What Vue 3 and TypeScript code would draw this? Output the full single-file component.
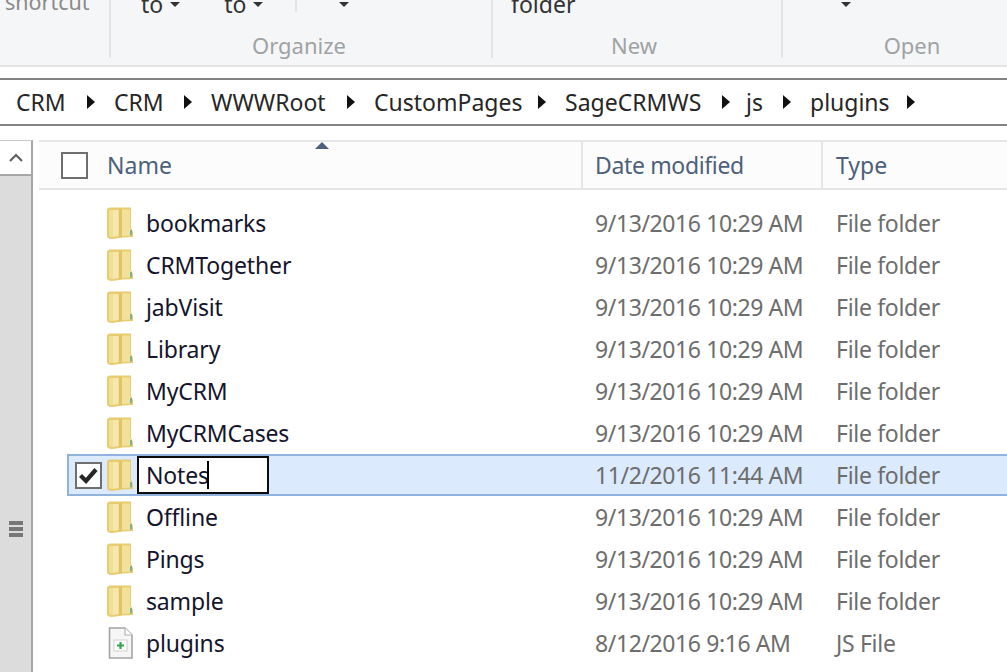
<script setup lang="ts">
interface Row {
  name: string
  date: string
  type: string
  selected?: boolean
  file?: boolean
}

const crumbs = ['CRM', 'CRM', 'WWWRoot', 'CustomPages', 'SageCRMWS', 'js', 'plugins']

const rows: Row[] = [
  { name: 'bookmarks', date: '9/13/2016 10:29 AM', type: 'File folder' },
  { name: 'CRMTogether', date: '9/13/2016 10:29 AM', type: 'File folder' },
  { name: 'jabVisit', date: '9/13/2016 10:29 AM', type: 'File folder' },
  { name: 'Library', date: '9/13/2016 10:29 AM', type: 'File folder' },
  { name: 'MyCRM', date: '9/13/2016 10:29 AM', type: 'File folder' },
  { name: 'MyCRMCases', date: '9/13/2016 10:29 AM', type: 'File folder' },
  { name: 'Notes', date: '11/2/2016 11:44 AM', type: 'File folder', selected: true },
  { name: 'Offline', date: '9/13/2016 10:29 AM', type: 'File folder' },
  { name: 'Pings', date: '9/13/2016 10:29 AM', type: 'File folder' },
  { name: 'sample', date: '9/13/2016 10:29 AM', type: 'File folder' },
  { name: 'plugins', date: '8/12/2016 9:16 AM', type: 'JS File', file: true },
]
</script>

<template>
  <div class="explorer">
    <header class="ribbon">
      <section class="group group-shortcut">
        <div class="tools"><span class="tool-label">shortcut</span></div>
      </section>
      <section class="group group-organize">
        <div class="tools">
          <span class="tool move">to<i class="caret"></i></span>
          <span class="tool copy">to<i class="caret"></i></span>
          <span class="tool-sep"></span>
          <span class="tool delete"><i class="caret"></i></span>
        </div>
        <div class="group-name">Organize</div>
      </section>
      <section class="group group-new">
        <div class="tools"><span class="tool folder">folder</span></div>
        <div class="group-name">New</div>
      </section>
      <section class="group group-open">
        <div class="tools"><span class="tool props"><i class="caret"></i></span></div>
        <div class="group-name">Open</div>
      </section>
    </header>

    <nav class="address">
      <template v-for="(crumb, i) in crumbs" :key="i">
        <span class="crumb">{{ crumb }}</span>
        <i class="arrow"></i>
      </template>
    </nav>

    <div class="body">
      <aside class="scrollbar">
        <div class="scroll-up">
          <svg width="16" height="10" viewBox="0 0 16 10">
            <path d="M2 8 L8 2 L14 8" fill="none" stroke="#606060" stroke-width="2.2" />
          </svg>
        </div>
        <div class="scroll-grip">
          <span></span><span></span><span></span>
        </div>
      </aside>

      <main class="list">
        <div class="head">
          <i class="sort"></i>
          <div class="head-name">
            <span class="check"></span>
            <span>Name</span>
          </div>
          <div class="head-date">Date modified</div>
          <div class="head-type">Type</div>
        </div>

        <div class="rows">
          <div v-for="row in rows" :key="row.name" class="row" :class="{ selected: row.selected }">
            <div class="check-slot">
              <span v-if="row.selected" class="check">
                <svg width="23" height="23" viewBox="0 0 23 23">
                  <path d="M3.5 11.5 L9 17 L19 5.5" fill="none" stroke="#262626" stroke-width="4.2" />
                </svg>
              </span>
            </div>

            <svg v-if="row.file" class="icon" width="26" height="32" viewBox="0 0 26 32">
              <path d="M2.5 1 H18 L25 8 V31 H2.5 Z" fill="#f6f6f6" stroke="#a4a4a4" stroke-width="1.6" />
              <path d="M18 1 V8 H25" fill="#fff" stroke="#b4b4b4" stroke-width="1.2" />
              <rect x="7" y="13" width="13" height="11" fill="#fff" stroke="#cfcfcf" />
              <path d="M13.5 15 V22 M10 18.5 H17" stroke="#2fa84a" stroke-width="2.2" />
            </svg>
            <svg v-else class="icon" width="26" height="32" viewBox="0 0 26 32">
              <path d="M0 3 Q0 0.5 3 0.5 H24 V21 L26 25 V30 L16 30.5 L5 32 Q0 32 0 29 Z" fill="#e8cc72" />
              <path d="M2 3 H12 V29 L4 30 Q2 30 2 28 Z" fill="#f1df93" />
              <path d="M6 3 H11 V29 L6 29.5 Z" fill="#f5e8ac" />
              <path d="M15 2.5 H23 V21 L24.8 25 V28.5 L15 29 Z" fill="#f2e299" />
              <path d="M12 2 H15 V30 H12 Z" fill="#e2c468" />
              <path d="M24 23 V28.5" stroke="#84ad98" stroke-width="2" />
            </svg>

            <div class="name">
              <span v-if="row.selected" class="rename">{{ row.name }}<b class="cursor"></b></span>
              <span v-else>{{ row.name }}</span>
            </div>
            <div class="date">{{ row.date }}</div>
            <div class="type">{{ row.type }}</div>
          </div>
        </div>
      </main>
    </div>
  </div>
</template>

<style>
html,
body {
  margin: 0;
  background: #fff;
}
</style>

<style scoped>
.explorer {
  width: 1007px;
  height: 672px;
  overflow: hidden;
  display: flex;
  flex-direction: column;
  font-family: "Noto Sans", "Open Sans", sans-serif;
  font-size: 23px;
  color: #1c1c2c;
}

.ribbon {
  height: 65px;
  flex: none;
  display: flex;
  background: #f5f6f7;
  border-bottom: 2px solid #e2e3e4;
}

.group {
  height: 58px;
  box-sizing: border-box;
  border-right: 2px solid #e3e4e6;
  display: flex;
  flex-direction: column;
}

.group-shortcut { width: 111px; }
.group-organize { width: 382px; }
.group-new { width: 290px; }
.group-open { flex: 1; border-right: 0; }

.tools {
  height: 32px;
  flex: none;
  display: flex;
  align-items: flex-end;
  overflow: hidden;
  position: relative;
  line-height: 26px;
  color: #333;
}

.tool-label {
  margin-left: 5px;
  margin-bottom: 17px;
  font-size: 21.5px;
  color: #8a8a8a;
}

.tool {
  display: flex;
  align-items: center;
  margin-bottom: 15px;
}

.move { margin-left: 30px; }
.copy { margin-left: 44px; }
.tool-sep {
  width: 2px;
  height: 12px;
  background: #e3e4e6;
  align-self: flex-start;
  margin-left: 32px;
}
.delete { margin-left: 35px; }
.folder { margin-left: 18px; }
.props { margin-left: 51px; }

.caret {
  width: 0;
  height: 0;
  border-left: 5px solid transparent;
  border-right: 5px solid transparent;
  border-top: 5px solid #333;
  margin-left: 7px;
  align-self: flex-start;
  margin-top: 11px;
}

.tool.delete,
.tool.props {
  margin-bottom: 0;
  align-self: flex-start;
}

.tool.delete .caret,
.tool.props .caret {
  margin-top: 2px;
}

.group-name {
  text-align: center;
  font-size: 22px;
  line-height: 26px;
  color: #a0a2a5;
}

.group-organize .group-name { padding-right: 4px; }
.group-new .group-name { padding-right: 6px; }
.group-open .group-name { padding-left: 34px; }

.address {
  margin-top: 11px;
  height: 44px;
  flex: none;
  display: grid;
  grid-template-columns: 71px 27px 70px 27px 136px 27px 164px 27px 157px 24px 37px 27px 97px 27px;
  align-items: center;
  padding-left: 16px;
  border-top: 2px solid #838383;
  border-bottom: 2px solid #838383;
}

.crumb {
  line-height: 44px;
  color: #262626;
}

.arrow {
  width: 0;
  height: 0;
  border-top: 7px solid transparent;
  border-bottom: 7px solid transparent;
  border-left: 8px solid #111;
}

.body {
  flex: 1;
  display: flex;
  padding-top: 14px;
  min-height: 0;
}

.scrollbar {
  width: 31px;
  flex: none;
  background: #dcdcdc;
  border-right: 2px solid #a6a6a6;
  border-top: 1px solid #c8c8c8;
  display: flex;
  flex-direction: column;
}

.scroll-up {
  height: 33px;
  background: #fff;
  border-bottom: 2px solid #a6a6a6;
  display: flex;
  align-items: center;
  justify-content: center;
}

.scroll-grip {
  margin-top: 345px;
  display: flex;
  flex-direction: column;
  align-items: center;
  gap: 2px;
}

.scroll-grip span {
  width: 14px;
  height: 4px;
  background: #777;
}

.list {
  flex: 1;
  margin-left: 6px;
  min-width: 0;
}

.head {
  position: relative;
  height: 46px;
  display: flex;
  align-items: center;
  color: #4c607a;
  background: #fcfcfd;
  border-top: 2px solid #e4e5e7;
  border-bottom: 2px solid #e4e5e7;
}

.sort {
  position: absolute;
  left: 276px;
  top: 0;
  width: 0;
  height: 0;
  border-left: 7px solid transparent;
  border-right: 7px solid transparent;
  border-bottom: 7px solid #4c607a;
}

.head-name {
  width: 542px;
  height: 100%;
  box-sizing: border-box;
  padding-left: 22px;
  display: flex;
  align-items: center;
  gap: 19px;
}

.head-date,
.head-type {
  height: 100%;
  display: flex;
  align-items: center;
  box-sizing: border-box;
  padding-left: 13px;
  border-left: 2px solid #e4e5e7;
}

.head-date {
  width: 240px;
  padding-left: 12px;
  letter-spacing: -0.35px;
}
.head-type { flex: 1; }

.check {
  width: 23px;
  height: 23px;
  flex: none;
  display: block;
  background: #fff;
  border: 2px solid #6f6f6f;
}

.check svg {
  display: block;
}

.rows {
  padding-top: 12px;
  margin-left: 28px;
  margin-right: -4px;
}

.row {
  height: 42px;
  box-sizing: border-box;
  display: grid;
  grid-template-columns: 40px 26px 463px 240px 1fr;
  align-items: center;
  color: #14142c;
}

.row.selected {
  background: #dbeafc;
  box-shadow: inset 0 0 0 2px #8fb3dc;
}

.check-slot {
  padding-left: 8px;
}

.icon {
  display: block;
}

.name {
  padding-left: 13px;
  line-height: 36px;
  letter-spacing: -0.15px;
}

.date,
.type {
  color: #6d6d6d;
}

.date {
  margin-left: -1px;
  letter-spacing: -0.4px;
}

.type {
  letter-spacing: -0.3px;
}

.rename {
  display: block;
  position: relative;
  box-sizing: border-box;
  width: 132px;
  height: 38px;
  margin-left: -9px;
  padding-left: 7px;
  line-height: 34px;
  background: #fff;
  border: 2px solid #0c0c0c;
}

.cursor {
  position: absolute;
  left: 68px;
  top: 3px;
  width: 2px;
  height: 28px;
  background: #000;
}
</style>
